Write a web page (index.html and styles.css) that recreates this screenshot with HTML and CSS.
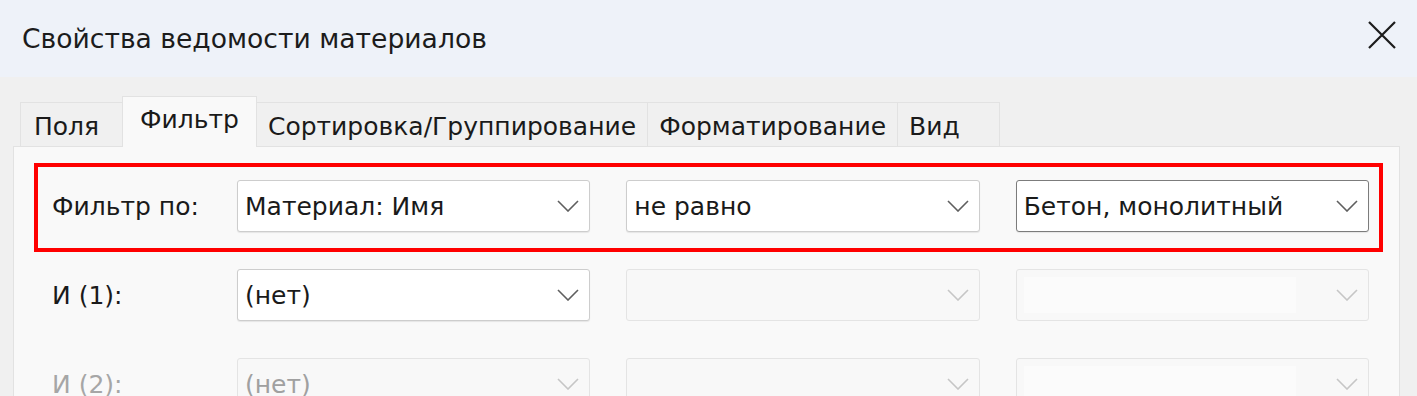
FILE: index.html
```html
<!DOCTYPE html>
<html lang="ru">
<head>
  <meta charset="UTF-8">
  <title>Свойства ведомости материалов</title>
  <link rel="stylesheet" href="styles.css">
</head>
<body>

  <div class="window">
    <div class="titlebar">
      <span class="title">Свойства ведомости материалов</span>
      <svg class="close" width="28" height="28" viewBox="0 0 28 28">
        <path d="M1 1 L27 27 M27 1 L1 27" stroke="#1c1c1c" stroke-width="2.2" fill="none"/>
      </svg>
    </div>

    <div class="content">
      <div class="tabs">
        <div class="tab">Поля</div>
        <div class="tab active">Фильтр</div>
        <div class="tab">Сортировка/Группирование</div>
        <div class="tab">Форматирование</div>
        <div class="tab">Вид</div>
      </div>

      <div class="panel">
        <div class="row highlight">
          <span class="label">Фильтр по:</span>
          <div class="combo">
            <span>Материал: Имя</span>
            <svg class="chevron" width="22" height="12" viewBox="0 0 22 12"><polyline points="1,1 11,11 21,1"/></svg>
          </div>
          <div class="combo">
            <span>не равно</span>
            <svg class="chevron" width="22" height="12" viewBox="0 0 22 12"><polyline points="1,1 11,11 21,1"/></svg>
          </div>
          <div class="combo focused">
            <span>Бетон, монолитный</span>
            <svg class="chevron" width="22" height="12" viewBox="0 0 22 12"><polyline points="1,1 11,11 21,1"/></svg>
          </div>
        </div>

        <div class="row">
          <span class="label">И (1):</span>
          <div class="combo">
            <span>(нет)</span>
            <svg class="chevron" width="22" height="12" viewBox="0 0 22 12"><polyline points="1,1 11,11 21,1"/></svg>
          </div>
          <div class="combo disabled">
            <span></span>
            <svg class="chevron" width="22" height="12" viewBox="0 0 22 12"><polyline points="1,1 11,11 21,1"/></svg>
          </div>
          <div class="combo disabled editable">
            <span class="field"></span>
            <svg class="chevron" width="22" height="12" viewBox="0 0 22 12"><polyline points="1,1 11,11 21,1"/></svg>
          </div>
        </div>

        <div class="row">
          <span class="label muted">И (2):</span>
          <div class="combo disabled">
            <span>(нет)</span>
            <svg class="chevron" width="22" height="12" viewBox="0 0 22 12"><polyline points="1,1 11,11 21,1"/></svg>
          </div>
          <div class="combo disabled">
            <span></span>
            <svg class="chevron" width="22" height="12" viewBox="0 0 22 12"><polyline points="1,1 11,11 21,1"/></svg>
          </div>
          <div class="combo disabled editable">
            <span class="field"></span>
            <svg class="chevron" width="22" height="12" viewBox="0 0 22 12"><polyline points="1,1 11,11 21,1"/></svg>
          </div>
        </div>
      </div>
    </div>
  </div>

</body>
</html>
```

FILE: styles.css
```css
html,
body {
  margin: 0;
  padding: 0;
  height: 396px;
  overflow: hidden;
  background: #f0f0f0;
}

body {
  font-family: 'DejaVu Sans', sans-serif;
  font-size: 25px;
  color: #1a1a1a;
}

.window {
  height: 396px;
  display: flex;
  flex-direction: column;
}

.titlebar {
  height: 77px;
  flex-shrink: 0;
  background-color: #eef2f9;
  display: flex;
  align-items: center;
  justify-content: space-between;
  padding: 0 21px 0 22px;
}

.title {
  font-size: 26.6px;
  color: #1c1c1c;
}

.close {
  margin-top: -8px;
}

.content {
  flex: 1;
  padding: 19px 17px 0 13px;
  display: flex;
  flex-direction: column;
}

.tabs {
  display: flex;
  align-items: flex-end;
  margin-left: 7px;
  position: relative;
  z-index: 1;
}

.tab {
  height: 44px;
  box-sizing: border-box;
  min-width: 103px;
  padding: 4px 11px 0 11px;
  display: flex;
  align-items: center;
  background: #f0f0f0;
  border: 1px solid #e2e2e2;
  border-bottom: none;
  margin-right: -1px;
}

.tab:first-child {
  padding-left: 13px;
}

.tab.active {
  height: 51px;
  padding: 0 17px 6px 17px;
  background: #f9f9f9;
  margin-bottom: -1px;
}

.panel {
  flex: 1;
  background: #f9f9f9;
  border: 1px solid #e2e2e2;
  padding: 16px 16px 0 20px;
}

.row {
  display: grid;
  grid-template-columns: 149px 1fr 1fr 1fr;
  column-gap: 36px;
  align-items: center;
  border: 4px solid transparent;
  padding: 13px 10px 16px 14px;
}

.row.highlight {
  border-color: #ff0000;
}

.label {
  white-space: nowrap;
}

.label.muted {
  color: #a6a6a6;
}

.combo {
  height: 52px;
  min-width: 0;
  box-sizing: border-box;
  background: #ffffff;
  border: 1px solid #cdcdcd;
  border-radius: 3px;
  box-shadow: 0 1px 1px rgba(0, 0, 0, 0.08);
  display: flex;
  align-items: center;
  justify-content: space-between;
  padding: 0 10px 0 7px;
  white-space: nowrap;
}

.chevron polyline {
  fill: none;
  stroke: #5f5f5f;
  stroke-width: 1.6;
}

.combo.focused {
  border-color: #7c7c7c;
}

.combo.disabled {
  background: #f8f8f8;
  border-color: #e4e4e4;
  box-shadow: none;
  color: #a0a0a0;
}

.combo.disabled .chevron polyline {
  stroke: #c6c6c6;
}

.combo.editable .field {
  align-self: stretch;
  flex: 1;
  margin: 7px 40px 7px 0;
  background: #fbfbfb;
}
```
